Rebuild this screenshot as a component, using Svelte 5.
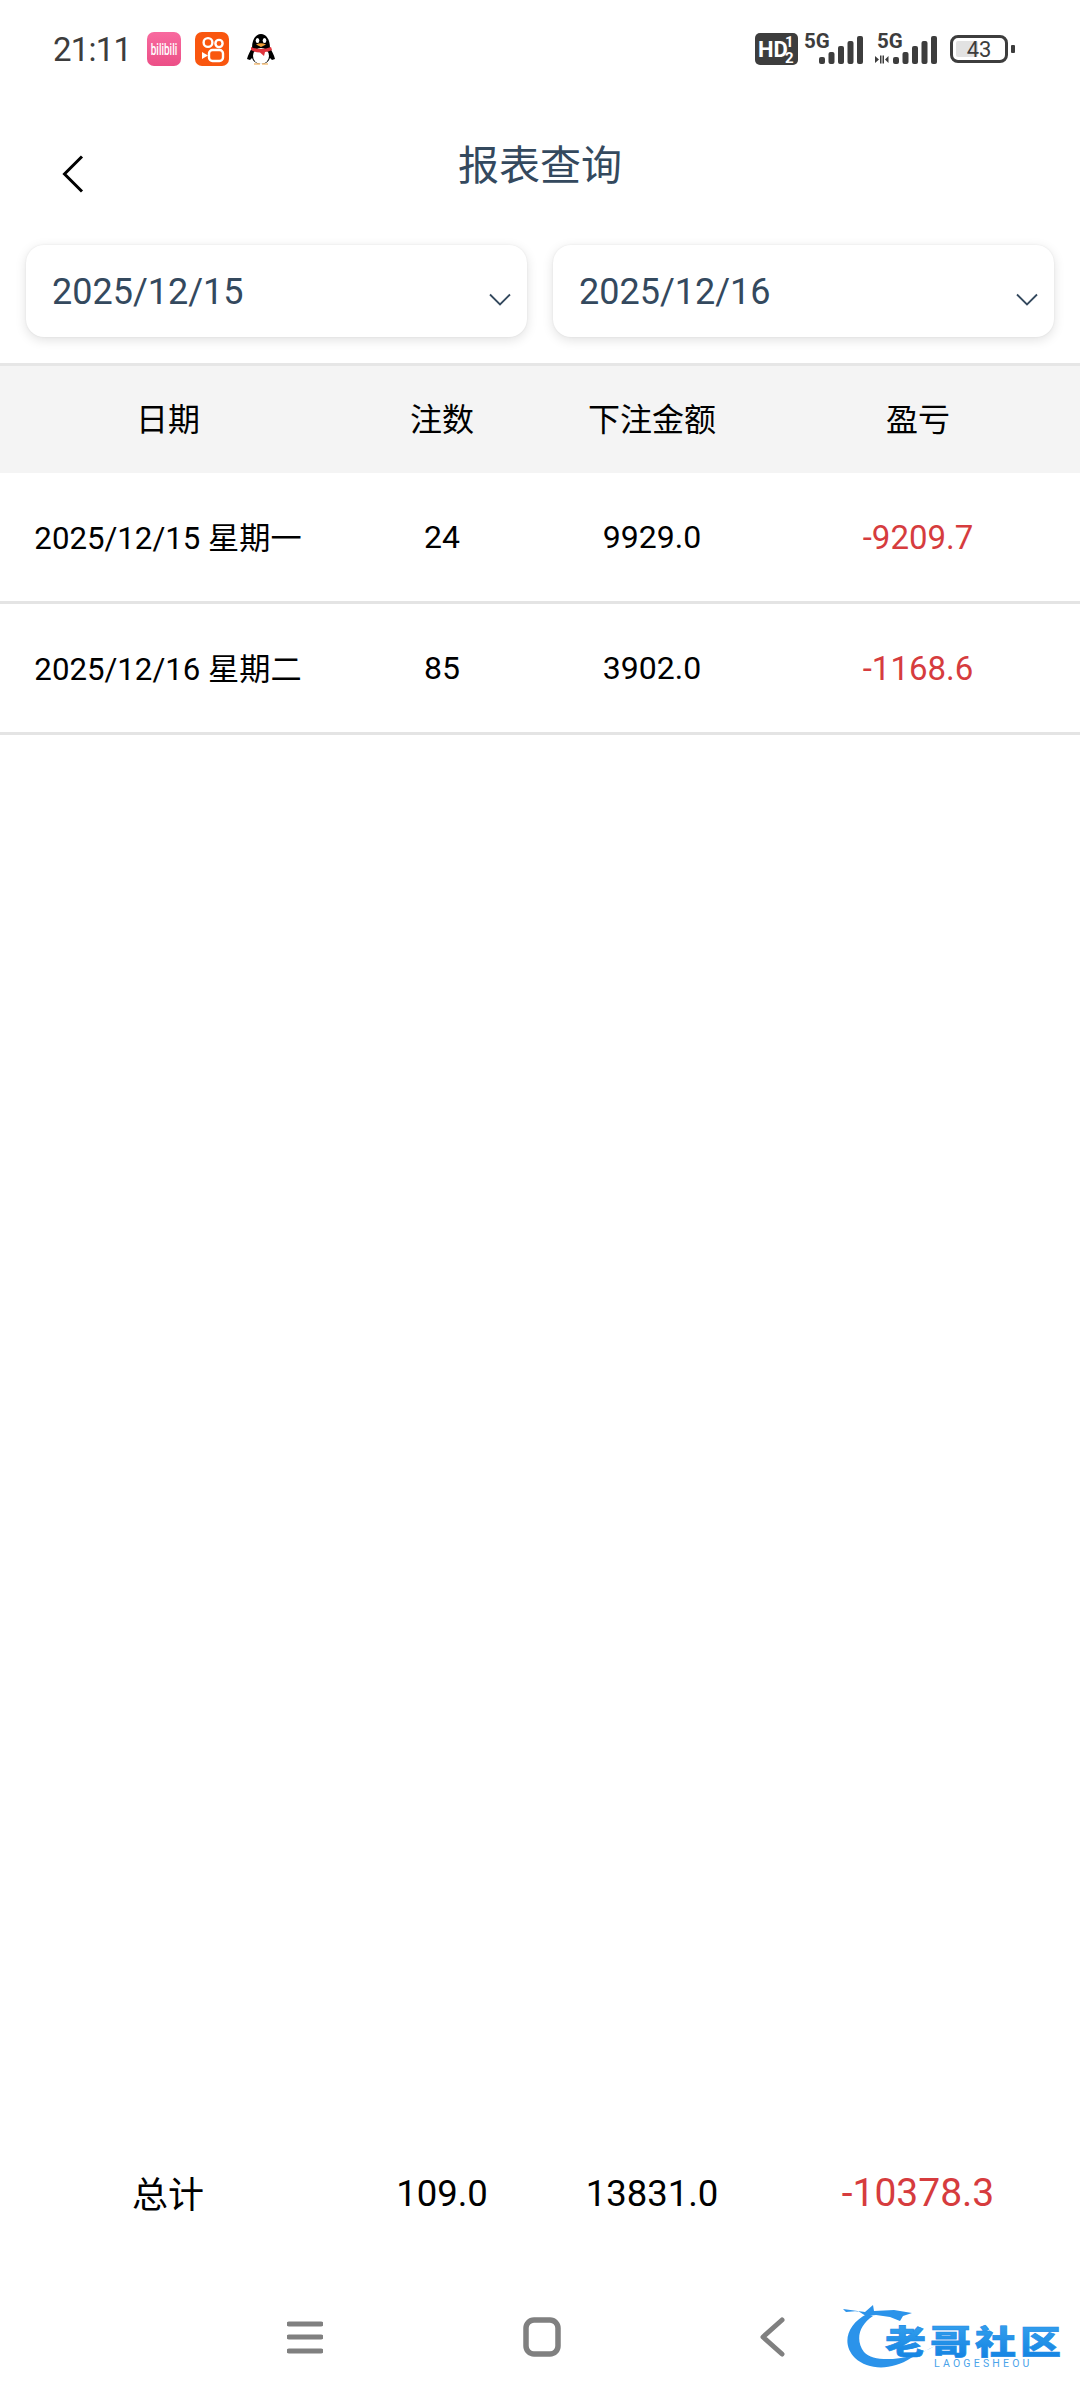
<!--
  报表查询 — daily betting report with date range, rows and a totals footer.
-->
<script lang="ts">
  const rows = [
    { date: '2025/12/15 星期一', count: '24', amount: '9929.0', profit: '-9209.7' },
    { date: '2025/12/16 星期二', count: '85', amount: '3902.0', profit: '-1168.6' },
  ];
  const ranges = ['2025/12/15', '2025/12/16'];
  // signal bars, x offset and top edge inside the indicator svg
  const bars = [
    [0, 25],
    [9.5, 20],
    [19, 14],
    [28.500, 9],
    [38, 4],
  ];
</script>

<div class="page">
  <div class="status">
    <span class="status__time">21:11</span>
    <div class="status__apps">
      <div class="app app--bili"><span>bilibili</span></div>
      <svg class="app" viewBox="0 0 34 34">
        <rect width="34" height="34" rx="7" fill="#f9560f" />
        <circle cx="13" cy="10.5" r="4.4" fill="none" stroke="#fff" stroke-width="2.4" />
        <circle cx="24" cy="11.5" r="3.6" fill="none" stroke="#fff" stroke-width="2.4" />
        <rect x="14" y="18" width="14" height="11" rx="3.5" fill="none" stroke="#fff" stroke-width="2.4" />
        <path d="M7 20l6 3.5L7 27z" fill="#fff" />
      </svg>
      <svg class="app app--qq" viewBox="0 0 28 32">
        <path d="M5 15C5 6 9 1 14 1s9 5 9 14c2 3 4 7 5 11l-3 1-2-2c-1 3-4 6-9 6s-8-3-9-6l-2 2-3-1c1-4 3-8 5-11z" fill="#000" />
        <ellipse cx="14" cy="23" rx="8" ry="8" fill="#fff" />
        <ellipse cx="10.500" cy="7.500" rx="1.800" ry="2.500" fill="#fff" />
        <ellipse cx="17.500" cy="7.500" rx="1.800" ry="2.500" fill="#fff" />
        <path d="M9 11.500q5-2.500 10 0l-5 2.500z" fill="#f2a13a" />
        <path d="M4 14q10 4 20 0l1 3q-4 2-7 2l-1 4-4-3.500q-5 0-9-2.500z" fill="#e0343c" />
        <path d="M7 31.500h6v-1H7zM15 31.500h6v-1h-6z" fill="#f2a13a" />
      </svg>
    </div>
    <div class="status__right">
      <svg class="indicators" viewBox="0 -6 182 46" width="182" height="46">
        <rect x="0" y="1" width="43" height="32" rx="5" fill="#3d3d3d" />
        <text x="3" y="25" class="ind-hd">HD</text>
        <text x="30" y="15" class="ind-frac">1</text>
        <text x="30" y="31" class="ind-frac">2</text>
        <text x="49" y="16" class="ind-5g">5G</text>
        <g fill="#3d3d3d">
          {#each bars as [x, top]}
            <rect x={x + 64} y={top} width="6" height={32 - top} rx="2" />
          {/each}
        </g>
        <text x="122" y="16" class="ind-5g">5G</text>
        <path d="M120 24l4 3.500-4 3.500zM125 23.500h1.500v8H125zM127.500 23.500h1.500v8h-1.500zM130 27.500l3.500-3.500v7z" fill="#3d3d3d" />
        <g fill="#3d3d3d">
          {#each bars as [x, top]}
            <rect x={x + 138} y={top} width="6" height={32 - top} rx="2" />
          {/each}
        </g>
      </svg>
      <div class="battery">
        <div class="battery__body">
          <span class="battery__fill"></span>
          <span class="battery__text">43</span>
        </div>
        <span class="battery__nub"></span>
      </div>
    </div>
  </div>

  <header class="head">
    <svg class="head__back" viewBox="0 0 22 38" width="22" height="38">
      <path d="M20 1.500L2.500 19 20 36.500" fill="none" stroke="#000" stroke-width="3" />
    </svg>
    <h1 class="head__title">报表查询</h1>
  </header>

  <div class="range">
    {#each ranges as value}
      <div class="range__box">
        <span>{value}</span>
        <svg class="range__caret" viewBox="0 0 22 14" width="22" height="14">
          <path d="M1 1.500l10 10 10-10" fill="none" stroke="#34495e" stroke-width="1.800" />
        </svg>
      </div>
    {/each}
  </div>

  <div class="row row--head">
    <span>日期</span>
    <span>注数</span>
    <span>下注金额</span>
    <span>盈亏</span>
  </div>
  {#each rows as row}
    <div class="row row--data">
      <span class="date">{row.date}</span>
      <span class="num">{row.count}</span>
      <span class="num">{row.amount}</span>
      <span class="num loss">{row.profit}</span>
    </div>
  {/each}

  <div class="row row--total">
    <span class="total-label">总计</span>
    <span>109.0</span>
    <span>13831.0</span>
    <span class="loss total-loss">-10378.3</span>
  </div>

  <nav class="nav">
    <svg viewBox="0 0 36 34" width="36" height="34">
      <path d="M2 4h32M2 17h32M2 31h32" stroke="#808080" stroke-width="5" stroke-linecap="round" />
    </svg>
    <svg viewBox="0 0 38 40" width="38" height="40">
      <rect x="3" y="3" width="32" height="34" rx="8" fill="none" stroke="#808080" stroke-width="5.500" />
    </svg>
    <svg viewBox="0 0 25 40" width="25" height="40">
      <path d="M22 3L3 20l19 17" fill="none" stroke="#808080" stroke-width="5" stroke-linecap="round" stroke-linejoin="round" />
    </svg>
  </nav>

  <svg class="mark" viewBox="0 0 222 70" width="222" height="70">
    <defs>
      <linearGradient id="mark-blue" x1="0" y1="0" x2="0" y2="1">
        <stop offset="0" stop-color="#3ba6f0" />
        <stop offset="1" stop-color="#0f7fe0" />
      </linearGradient>
    </defs>
    <path d="M24 10C4 20-2 40 12 54c13 12 36 13 56 0 8-4 16-8 24-12-24 14-60 18-71 6-9-12-5-27 9-36z" fill="#2b93ea" />
    <path d="M0 5l22 3 8-7 1 6 20-1 18 3-9 3-3 5-10-4-14-2-10 1-8-5L3 8z" fill="#2b93ea" />
    <g transform="translate(42 50) scale(1 .8)">
      <text class="mark__text" x="0" y="0">老哥社区</text>
    </g>
    <text class="mark__sub" x="91" y="63">LAOGESHEOU</text>
  </svg>
</div>

<style>
  :global(body) {
    margin: 0;
    background: #fff;
  }

  .page {
    position: relative;
    display: flex;
    flex-direction: column;
    width: 1080px;
    height: 2400px;
    overflow: hidden;
    background: #fff;
    font-family: Roboto, 'Noto Sans CJK SC', sans-serif;
    color: #000;
  }

  .status {
    display: flex;
    align-items: center;
    height: 98px;
    padding: 0 65px 0 53px;
    box-sizing: border-box;
    flex-shrink: 0;
  }

  .status__time {
    font-size: 33px;
    letter-spacing: -0.8px;
    color: #3d3d3d;
    width: 94px;
  }

  .status__apps {
    display: flex;
    align-items: center;
    gap: 14px;
  }

  .app {
    width: 34px;
    height: 34px;
  }

  .app--bili {
    display: flex;
    align-items: center;
    justify-content: center;
    border-radius: 7px;
    background: linear-gradient(#f86a9f, #ec4f87);
    color: #fff;
    font-size: 10px;
    font-weight: 500;
    overflow: hidden;
  }

  .app--bili span {
    transform: scaleY(1.6);
  }

  .app--qq {
    width: 28px;
    height: 32px;
    margin-left: 4px;
  }

  .status__right {
    display: flex;
    align-items: center;
    gap: 13px;
    margin-left: auto;
  }

  .ind-hd {
    font: 700 22px Roboto, sans-serif;
    fill: #fff;
  }

  .ind-frac {
    font: 700 15px Roboto, sans-serif;
    fill: #fff;
  }

  .ind-5g {
    font: 700 20.5px Roboto, sans-serif;
    fill: #3d3d3d;
  }

  .battery {
    display: flex;
    align-items: center;
    gap: 3px;
  }

  .battery__body {
    position: relative;
    display: flex;
    align-items: center;
    justify-content: center;
    width: 58px;
    height: 28px;
    box-sizing: border-box;
    border: 3px solid #3d3d3d;
    border-radius: 8px;
    font-size: 22px;
    color: #3d3d3d;
  }

  .battery__fill {
    position: absolute;
    left: 3px;
    top: 3px;
    bottom: 3px;
    width: 22px;
    border-radius: 2px;
    background: #e2e2e2;
  }

  .battery__text {
    position: relative;
  }

  .battery__nub {
    width: 4px;
    height: 8px;
    border-radius: 1px;
    background: #3d3d3d;
  }

  .head {
    position: relative;
    display: flex;
    justify-content: center;
    align-items: center;
    height: 130px;
    padding-bottom: 3px;
    box-sizing: border-box;
    flex-shrink: 0;
  }

  .head__back {
    position: absolute;
    left: 62px;
    top: 57px;
  }

  .head__title {
    margin: 0;
    font-size: 41px;
    font-weight: 400;
    color: #34495e;
  }

  .range {
    display: grid;
    grid-template-columns: 1fr 1fr;
    gap: 26px;
    margin-top: 17px;
    padding: 0 26px;
  }

  .range__box {
    position: relative;
    display: flex;
    align-items: center;
    height: 92px;
    padding: 1px 26px 0;
    box-sizing: border-box;
    border-radius: 18px;
    background: #fff;
    box-shadow: 0 0 2px rgba(0, 0, 0, 0.08), 0 3px 12px rgba(0, 0, 0, 0.12);
    font-size: 36px;
    color: #34495e;
  }

  .range__caret {
    position: absolute;
    right: 16px;
    top: 48px;
  }

  .row {
    display: grid;
    grid-template-columns: 336px 212px 208px 324px;
    align-items: center;
    text-align: center;
    flex-shrink: 0;
  }

  .row--head {
    margin-top: 26px;
    height: 110px;
    padding-bottom: 6px;
    box-sizing: border-box;
    border-top: 3px solid #e6e6e6;
    background: #f4f4f4;
    font-size: 32px;
  }

  .row--data {
    height: 131px;
    box-sizing: border-box;
    border-bottom: 3px solid #e4e4e4;
    font-size: 31.2px;
  }

  .date {
    margin-top: -3px;
  }

  .num {
    font-size: 32px;
  }

  .row--total {
    height: 100px;
    margin-top: auto;
    margin-bottom: 31px;
    font-size: 36.5px;
  }

  .total-label {
    font-size: 36px;
    margin-top: -3px;
  }

  .total-loss {
    font-size: 39px;
  }

  .loss {
    color: #d63c3e;
  }

  .num.loss {
    font-size: 33px;
  }

  .nav {
    display: flex;
    align-items: center;
    justify-content: space-between;
    height: 126px;
    padding: 0 295px 0 287px;
    flex-shrink: 0;
  }

  .mark {
    position: absolute;
    left: 843px;
    top: 2304px;
  }

  .mark__text {
    font-family: 'Noto Sans CJK SC', sans-serif;
    font-size: 41px;
    font-weight: 900;
    letter-spacing: 4px;
    fill: url(#mark-blue);
    stroke: #1f8be6;
    stroke-width: 0.8px;
  }

  .mark__sub {
    font-family: Roboto, sans-serif;
    font-size: 10.5px;
    letter-spacing: 3.2px;
    fill: #4aa3ea;
  }
</style>
